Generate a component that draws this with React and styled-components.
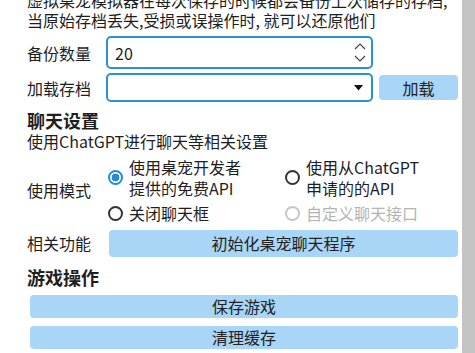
import React from "react";
import styled, { createGlobalStyle, css } from "styled-components";

const GlobalStyle = createGlobalStyle`
  html, body {
    margin: 0;
    padding: 0;
    background: #ffffff;
  }
  body {
    width: 475px;
    height: 353px;
    overflow: hidden;
    font-family: "Noto Sans CJK SC", "Noto Sans", sans-serif;
    color: #1e1e1e;
  }
`;

const Page = () => {
  return (
    <>
      <GlobalStyle />
      <Frame>
        <Viewport>
          <Content>
            <Intro>
              <Line>虚拟桌宠模拟器在每次保存的时候都会备份上次储存的存档,</Line>
              <Line>当原始存档丢失,受损或误操作时, 就可以还原他们</Line>
            </Intro>

            <FormRow $top={6}>
              <Label>备份数量</Label>
              <NumberBox>
                <BoxText>20</BoxText>
                <Spinner>
                  <svg width="12" height="8" viewBox="0 0 12 8">
                    <path d="M1 7 L6 2 L11 7" fill="none" stroke="#444" strokeWidth="1.2" />
                  </svg>
                  <svg width="12" height="8" viewBox="0 0 12 8">
                    <path d="M1 1 L6 6 L11 1" fill="none" stroke="#444" strokeWidth="1.2" />
                  </svg>
                </Spinner>
              </NumberBox>
            </FormRow>

            <FormRow $top={4}>
              <Label>加载存档</Label>
              <SelectBox>
                <svg width="9" height="6" viewBox="0 0 9 6">
                  <path d="M0 0 L9 0 L4.5 5.5 Z" fill="#111" />
                </svg>
              </SelectBox>
              <SmallButton>加载</SmallButton>
            </FormRow>

            <Heading $top={6}>聊天设置</Heading>
            <Desc>使用ChatGPT进行聊天等相关设置</Desc>

            <FormRow $top={6}>
              <Label>使用模式</Label>
              <RadioGrid>
                <RadioItem>
                  <Radio $checked />
                  <RadioText>
                    <Line>使用桌宠开发者</Line>
                    <Line>提供的免费API</Line>
                  </RadioText>
                </RadioItem>
                <RadioItem>
                  <Radio />
                  <RadioText>
                    <Line>使用从ChatGPT</Line>
                    <Line>申请的的API</Line>
                  </RadioText>
                </RadioItem>
                <RadioItem>
                  <Radio />
                  <RadioText>关闭聊天框</RadioText>
                </RadioItem>
                <RadioItem>
                  <Radio $disabled />
                  <RadioText $disabled>自定义聊天接口</RadioText>
                </RadioItem>
              </RadioGrid>
            </FormRow>

            <FormRow $top={6}>
              <Label>相关功能</Label>
              <WideButton $height={27}>初始化桌宠聊天程序</WideButton>
            </FormRow>

            <Heading $top={8}>游戏操作</Heading>
            <ActionList>
              <WideButton $height={23}>保存游戏</WideButton>
              <WideButton $height={23}>清理缓存</WideButton>
            </ActionList>
          </Content>
        </Viewport>
        <ScrollTrack />
      </Frame>
    </>
  );
};

export default Page;

const Frame = styled.div`
  display: flex;
  flex-direction: row;
  width: 475px;
  height: 353px;
`;

const Viewport = styled.div`
  flex: 1;
  overflow: hidden;
`;

const Content = styled.div`
  display: flex;
  flex-direction: column;
  padding: 0px 4px 0px 27px;
  margin-top: -9px;
`;

const ScrollTrack = styled.div`
  width: 13px;
  height: 353px;
  background: #c3c3c3;
`;

const Intro = styled.div`
  font-size: 16px;
  line-height: 19.5px;
`;

const Line = styled.div`
  white-space: nowrap;
`;

const FormRow = styled.div`
  display: flex;
  flex-direction: row;
  align-items: center;
  margin-top: ${({ $top }) => $top}px;
`;

const Label = styled.div`
  width: 79px;
  flex-shrink: 0;
  font-size: 16px;
  line-height: 20px;
`;

const boxStyle = css`
  box-sizing: border-box;
  width: 267px;
  border: 2px solid #2a93cc;
  border-radius: 5px;
  display: flex;
  flex-direction: row;
  align-items: center;
  background: #ffffff;
`;

const NumberBox = styled.div`
  ${boxStyle}
  height: 33px;
  padding: 0px 5px 0px 7px;
  justify-content: space-between;
`;

const BoxText = styled.span`
  font-size: 16px;
  line-height: 20px;
`;

const Spinner = styled.div`
  display: flex;
  flex-direction: column;
  gap: 5px;
`;

const SelectBox = styled.div`
  ${boxStyle}
  height: 29px;
  padding: 0px 8px;
  justify-content: flex-end;
`;

const buttonStyle = css`
  box-sizing: border-box;
  background: #a9d5f6;
  border-radius: 4px;
  display: flex;
  align-items: center;
  justify-content: center;
  font-size: 16px;
  color: #222;
`;

const SmallButton = styled.div`
  ${buttonStyle}
  width: 79px;
  height: 25px;
  margin-left: 6px;
`;

const WideButton = styled.div`
  ${buttonStyle}
  flex: 1;
  height: ${({ $height }) => $height}px;
  margin-left: 3px;
`;

const Heading = styled.div`
  font-size: 18px;
  font-weight: 700;
  line-height: 24px;
  margin-top: ${({ $top }) => $top}px;
`;

const Desc = styled.div`
  font-size: 16px;
  line-height: 19px;
`;

const RadioGrid = styled.div`
  display: grid;
  grid-template-columns: 177px 1fr;
  row-gap: 5px;
  padding-left: 2px;
`;

const RadioItem = styled.div`
  display: flex;
  flex-direction: row;
  align-items: center;
  gap: 6px;
`;

const Radio = styled.span`
  box-sizing: border-box;
  width: 15px;
  height: 15px;
  border-radius: 50%;
  border: 2px solid ${({ $disabled }) => ($disabled ? "#c6c6c6" : "#333")};
  flex-shrink: 0;
  ${({ $checked }) =>
    $checked &&
    css`
      border-color: #2389db;
      background: radial-gradient(circle, #2389db 0 3.6px, #ffffff 4.2px);
    `}
`;

const RadioText = styled.div`
  font-size: 16px;
  line-height: 20.5px;
  color: ${({ $disabled }) => ($disabled ? "#b4b4b4" : "#1e1e1e")};
`;

const ActionList = styled.div`
  display: flex;
  flex-direction: column;
  gap: 8px;
  margin-top: 6px;
  & > div {
    flex: none;
  }
`;
